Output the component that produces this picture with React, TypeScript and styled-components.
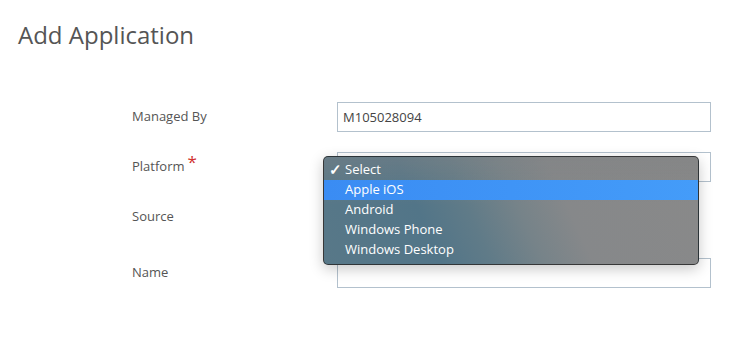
import React from "react";
import styled, { createGlobalStyle } from "styled-components";

const Global = createGlobalStyle`
  html, body { margin: 0; padding: 0; background: #ffffff; }
  body { font-family: "Open Sans", "Noto Sans", sans-serif; }
  * { box-sizing: border-box; }
`;

const Page = styled.div`
  width: 743px;
  height: 340px;
  padding: 19px 0 0 18px;
`;

const Title = styled.h1`
  margin: 0;
  font-size: 24px;
  font-weight: 400;
  color: #555555;
  line-height: 32px;
  letter-spacing: 0;
`;

const Form = styled.div`
  margin-top: 51px;
  padding-left: 114px;
  display: flex;
  flex-direction: column;
`;

const Row = styled.div<{ $gap: number }>`
  display: grid;
  grid-template-columns: 205px 374px;
  align-items: center;
  height: 30px;
  margin-bottom: ${(p) => p.$gap}px;
`;

const Label = styled.div`
  font-size: 13px;
  color: #555555;
  position: relative;
  display: flex;
  align-items: flex-start;
  margin-top: -2px;
`;

const Required = styled.span`
  color: #d0312d;
  font-size: 17px;
  line-height: 13px;
  margin-left: 3px;
  margin-top: -2px;
`;

const Field = styled.div`
  position: relative;
  height: 30px;
`;

const Input = styled.div`
  height: 30px;
  border: 1px solid #b3c1cd;
  background: #fff;
  font-size: 13px;
  color: #444;
  padding-left: 5px;
  display: flex;
  align-items: center;
`;

const Menu = styled.div`
  position: absolute;
  left: -14px;
  top: 4px;
  width: 376px;
  height: 109px;
  border-radius: 5px;
  border: 1px solid rgba(30, 30, 30, 0.75);
  background:
    linear-gradient(to bottom, rgba(128, 130, 131, 0.45) 0%, rgba(128, 130, 131, 0) 45%),
    linear-gradient(
      66deg,
      #587888 0%,
      #527588 28%,
      #607b88 40%,
      #768389 52%,
      #86888a 64%,
      #898989 100%
    );
  box-shadow: 0 4px 14px rgba(0, 0, 0, 0.22);
  padding: 3px 0 5px;
  z-index: 5;
  overflow: hidden;
`;

const MenuItem = styled.div<{ $active?: boolean }>`
  height: 20px;
  line-height: 19px;
  padding-left: 21px;
  position: relative;
  font-size: 13px;
  font-weight: 500;
  color: #ffffff;
  background: ${(p) =>
    p.$active ? "linear-gradient(90deg, #3a8cf3 0%, #449cf9 100%)" : "transparent"};
`;

const Check = styled.span`
  position: absolute;
  left: 5px;
  top: 0;
  line-height: 19px;
  font-size: 15px;
  font-weight: 700;
`;

export default function App() {
  return (
    <Page>
      <Global />
      <Title>Add Application</Title>
      <Form>
        <Row $gap={20}>
          <Label>Managed By</Label>
          <Field>
            <Input>M105028094</Input>
          </Field>
        </Row>
        <Row $gap={20}>
          <Label>
            Platform<Required>*</Required>
          </Label>
          <Field>
            <Input />
            <Menu>
              <MenuItem>
                <Check>✓</Check>Select
              </MenuItem>
              <MenuItem $active>Apple iOS</MenuItem>
              <MenuItem>Android</MenuItem>
              <MenuItem>Windows Phone</MenuItem>
              <MenuItem>Windows Desktop</MenuItem>
            </Menu>
          </Field>
        </Row>
        <Row $gap={26}>
          <Label>Source</Label>
          <Field />
        </Row>
        <Row $gap={0}>
          <Label>Name</Label>
          <Field>
            <Input />
          </Field>
        </Row>
      </Form>
    </Page>
  );
}
